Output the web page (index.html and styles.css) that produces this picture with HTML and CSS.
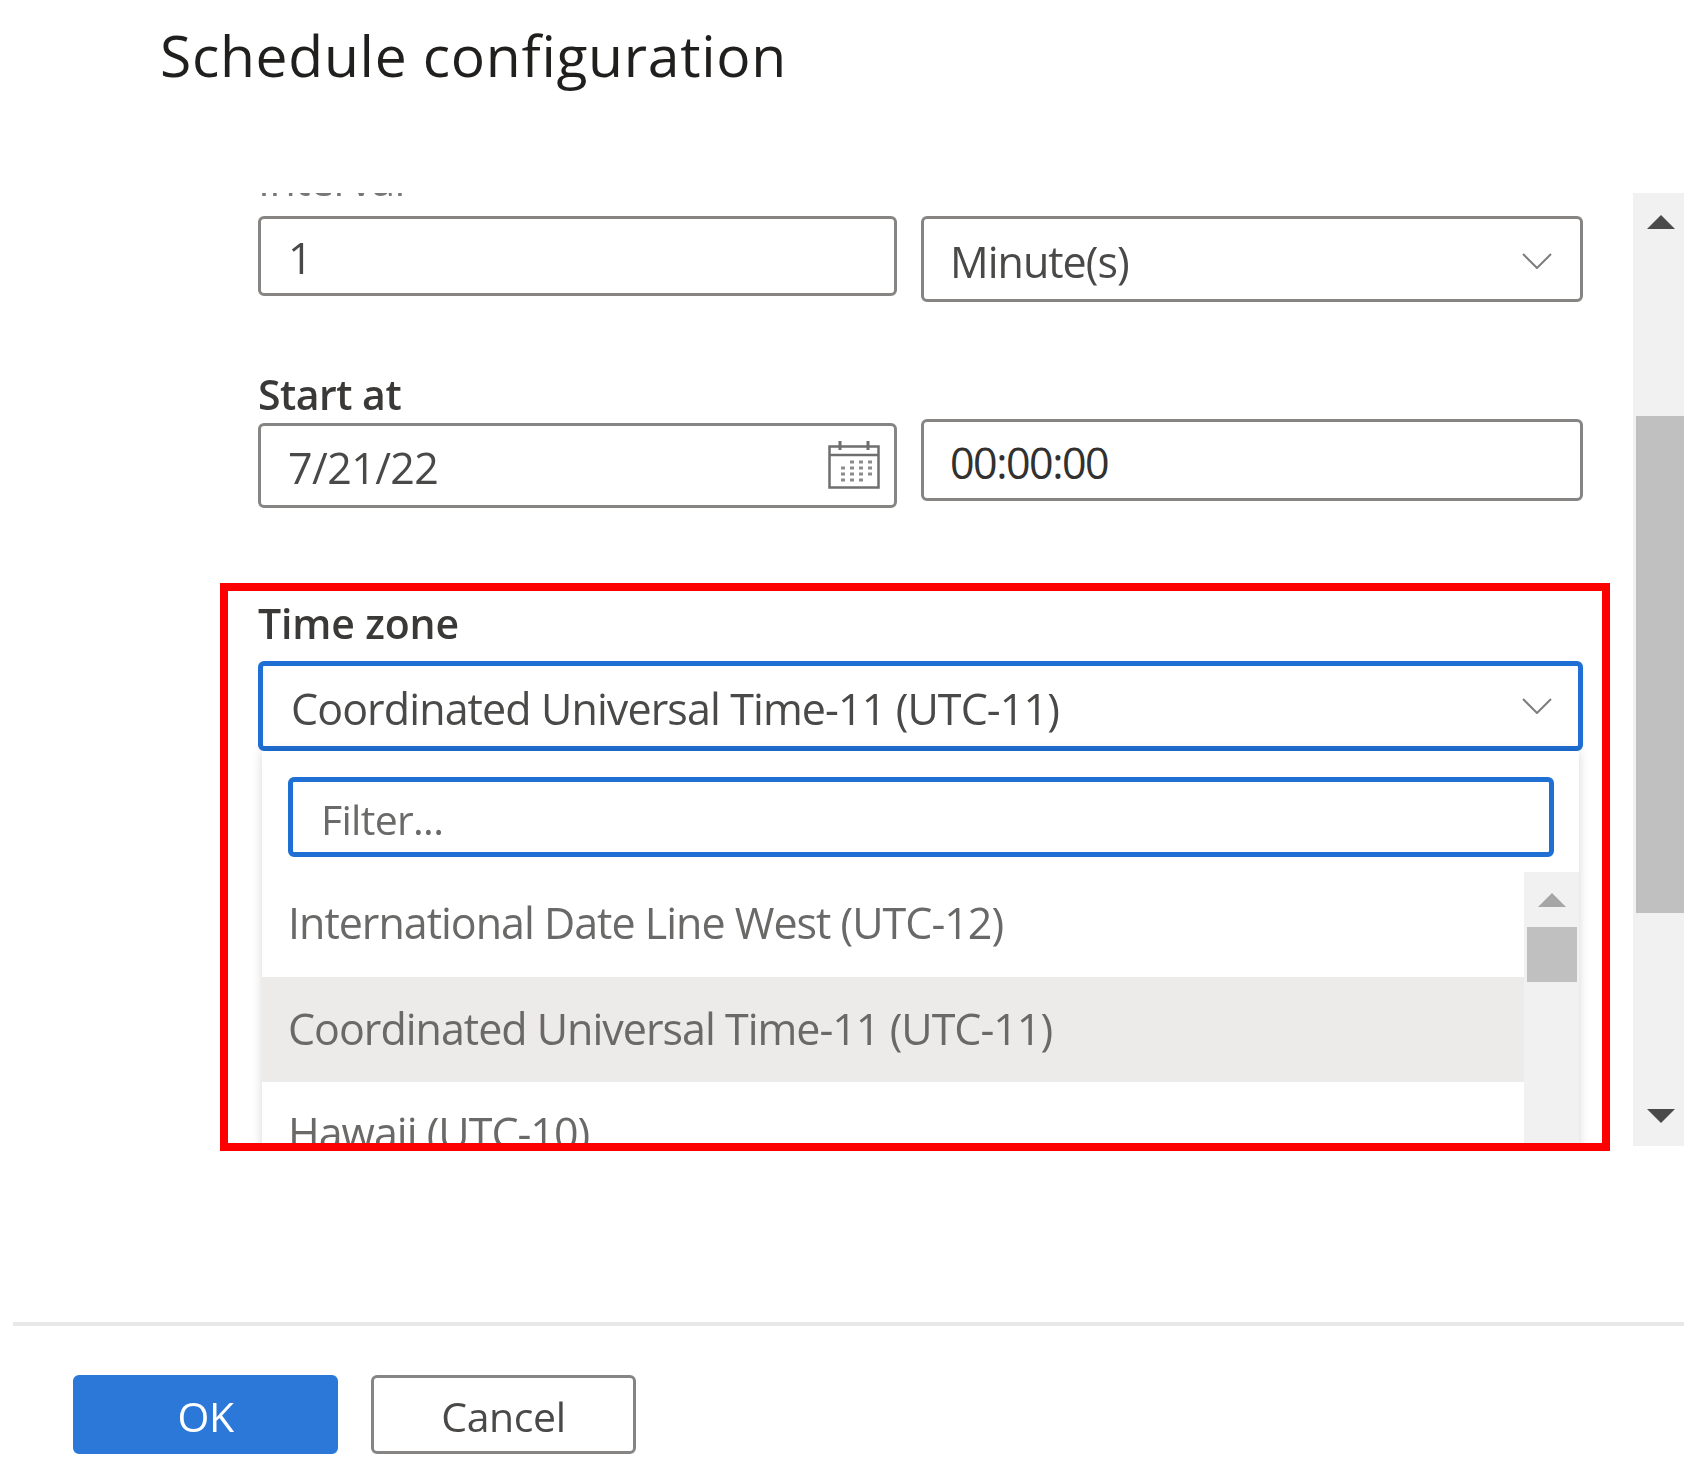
FILE: index.html
```html
<!DOCTYPE html>
<html lang="en">

<head>
   <meta charset="UTF-8">
   <meta name="viewport" content="width=device-width, initial-scale=1.0">
   <link rel="stylesheet" href="styles.css">
   <title>Schedule configuration</title>
</head>

<body>
   <main class="dialog">

      <h1 class="dialog-title">Schedule configuration</h1>

      <div class="dialog-body">
         <div class="form">
            <div class="cut-label">Interval</div>

            <div class="form-row">
               <div class="field input-one">1</div>
               <div class="field select-minute">
                  <span>Minute(s)</span>
                  <svg class="chevron" viewBox="0 0 30 16"><path d="M1 1 L15 15 L29 1"/></svg>
               </div>
            </div>

            <div class="form-row start-row">
               <div>
                  <div class="label">Start at</div>
                  <div class="field input-date">
                     <span>7/21/22</span>
                     <svg class="calendar" viewBox="0 0 52 48">
                        <rect x="1.5" y="5.5" width="49" height="41" fill="none" stroke="#6f6f6f" stroke-width="2.5"/>
                        <path d="M1 14 H51" stroke="#6f6f6f" stroke-width="2.5"/>
                        <path d="M12 0 V9 M40 0 V9" stroke="#6f6f6f" stroke-width="3"/>
                        <path d="M22 21 h4 M31 21 h4 M40 21 h4 M13 27 h4 M22 27 h4 M31 27 h4 M40 27 h4 M13 33 h4 M22 33 h4 M31 33 h4 M40 33 h4 M13 39 h4 M22 39 h4 M31 39 h4" stroke="#8c8c8c" stroke-width="3"/>
                     </svg>
                  </div>
               </div>
               <div class="field input-time">00:00:00</div>
            </div>

            <section class="timezone">
               <div class="label zone-label">Time zone</div>
               <div class="field select-zone">
                  <span>Coordinated Universal Time-11 (UTC-11)</span>
                  <svg class="chevron" viewBox="0 0 30 16"><path d="M1 1 L15 15 L29 1"/></svg>
               </div>

               <div class="dropdown">
                  <div class="filter">Filter...</div>
                  <div class="list-wrap">
                     <div class="list">
                        <div class="option">International Date Line West (UTC-12)</div>
                        <div class="option selected">Coordinated Universal Time-11 (UTC-11)</div>
                        <div class="option">Hawaii (UTC-10)</div>
                     </div>
                     <div class="list-scroll">
                        <div class="arrow-up small"></div>
                        <div class="list-thumb"></div>
                     </div>
                  </div>
               </div>
            </section>
         </div>

         <div class="scrollbar">
            <div class="scroll-btn"><div class="arrow-up"></div></div>
            <div class="scroll-thumb"></div>
            <div class="scroll-btn bottom"><div class="arrow-down"></div></div>
         </div>
      </div>

      <footer class="dialog-footer">
         <button class="btn primary">OK</button>
         <button class="btn">Cancel</button>
      </footer>

   </main>
</body>

</html>
```

FILE: styles.css
```css
* {
   padding: 0;
   margin: 0;
   box-sizing: border-box;
}

body {
   font-family: "Open Sans", Arial, sans-serif;
   background-color: #fff;
   color: #3a3938;
}

.dialog {
   width: 1698px;
   height: 1479px;
   display: flex;
   flex-direction: column;
   overflow: hidden;
   filter: blur(0.6px);
}

.dialog-title {
   flex: 0 0 193px;
   padding: 10px 0 0 160px;
   font-size: 57px;
   font-weight: 500;
   line-height: 90px;
   letter-spacing: 0.7px;
   color: #201f1e;
}

.dialog-body {
   display: flex;
   flex: 0 0 959px;
   overflow: hidden;
}

.form {
   width: 1413px;
   margin-left: 220px;
   overflow: hidden;
}

.cut-label {
   height: 59px;
   margin: -36px 0 0 38px;
   font-size: 43px;
   line-height: 45px;
   letter-spacing: -0.6px;
   color: #777;
}

.form-row {
   display: grid;
   grid-template-columns: 639px 662px;
   column-gap: 24px;
   margin-left: 38px;
   align-items: start;
}

.start-row {
   margin-top: 66px;
}

.label {
   height: 55px;
   font-size: 41px;
   font-weight: 600;
   line-height: 52px;
   letter-spacing: -0.5px;
   color: #3a3938;
}

.field {
   display: flex;
   align-items: center;
   justify-content: space-between;
   padding: 0 26px;
   font-size: 43px;
   letter-spacing: -1px;
   background-color: #fff;
   border: 3px solid #868584;
   border-radius: 6px;
   color: #4a4948;
}

.input-one {
   height: 80px;
   padding: 2px 27px 0;
}

.select-minute {
   height: 86px;
   padding: 4px 28px 0 26px;
}

.input-date {
   height: 85px;
   padding: 4px 14px 0 27px;
   letter-spacing: -0.6px;
}

.input-time {
   height: 82px;
   align-self: end;
   margin-bottom: 7px;
   padding-top: 5px;
   letter-spacing: -1.5px;
   color: #323130;
}

.chevron {
   width: 30px;
   height: 16px;
   fill: none;
   stroke: #7d7d7d;
   stroke-width: 2;
   flex-shrink: 0;
}

.calendar {
   width: 52px;
   height: 48px;
   margin-top: -5px;
}

.timezone {
   width: 1390px;
   height: 568px;
   margin-top: 75px;
   padding: 6px 19px 0 30px;
   border: 8px solid #f00;
   overflow: hidden;
}

.zone-label {
   height: 64px;
   letter-spacing: -0.15px;
}

.select-zone {
   height: 90px;
   padding: 0 26px 0 28px;
   letter-spacing: -0.9px;
   border: 5px solid #1f6fd4;
}

.select-zone span {
   padding-top: 5px;
}

.dropdown {
   margin: 0 4px;
   padding-top: 26px;
   box-shadow: 0 0 10px rgba(0, 0, 0, 0.16);
}

.filter {
   height: 80px;
   margin: 0 25px 0 26px;
   padding: 2px 28px 0;
   font-size: 41px;
   line-height: 70px;
   letter-spacing: -0.7px;
   border: 5px solid #1f6fd4;
   border-radius: 6px;
   color: #6b6a69;
}

.list-wrap {
   display: flex;
   margin-top: 15px;
}

.list {
   flex: 1;
}

.option {
   height: 105px;
   padding: 0 26px;
   font-size: 43px;
   line-height: 101px;
   letter-spacing: -1px;
   color: #6a6968;
}

.selected {
   line-height: 103px;
   background-color: #edebe9;
}

.list-scroll {
   width: 55px;
   height: 300px;
   display: flex;
   flex-direction: column;
   align-items: center;
   padding-top: 21px;
   background-color: #f1f1f1;
}

.list-thumb {
   width: 50px;
   height: 55px;
   margin-top: 20px;
   background-color: #c0c0c0;
}

.scrollbar {
   width: 51px;
   height: 953px;
   display: flex;
   flex-direction: column;
   background-color: #f1f1f1;
}

.scroll-btn {
   height: 223px;
   padding: 22px 0 0 4px;
   display: flex;
   justify-content: center;
   align-items: flex-start;
}

.scroll-btn.bottom {
   height: 233px;
   padding-top: 196px;
}

.scroll-thumb {
   height: 497px;
   margin-left: 3px;
   background-color: #c0c0c0;
}

.arrow-up {
   width: 0;
   height: 0;
   border-left: 14px solid transparent;
   border-right: 14px solid transparent;
   border-bottom: 14px solid #4a4a4a;
}

.arrow-up.small {
   border-bottom-color: #a6a6a6;
}

.arrow-down {
   width: 0;
   height: 0;
   border-left: 14px solid transparent;
   border-right: 14px solid transparent;
   border-top: 14px solid #4a4a4a;
}

.dialog-footer {
   display: flex;
   gap: 33px;
   flex: 0 0 157px;
   margin: 170px 14px 0 13px;
   border-top: 4px solid #e8e8e8;
   padding: 49px 0 0 60px;
   align-items: flex-start;
}

.btn {
   width: 265px;
   height: 79px;
   padding-top: 3px;
   font-family: "Open Sans", Arial, sans-serif;
   font-size: 41px;
   letter-spacing: -0.4px;
   background-color: #fff;
   border: 3px solid #868584;
   border-radius: 6px;
   color: #4a4948;
}

.btn.primary {
   background-color: #2b78d9;
   border-color: #2b78d9;
   color: #fff;
}
```
